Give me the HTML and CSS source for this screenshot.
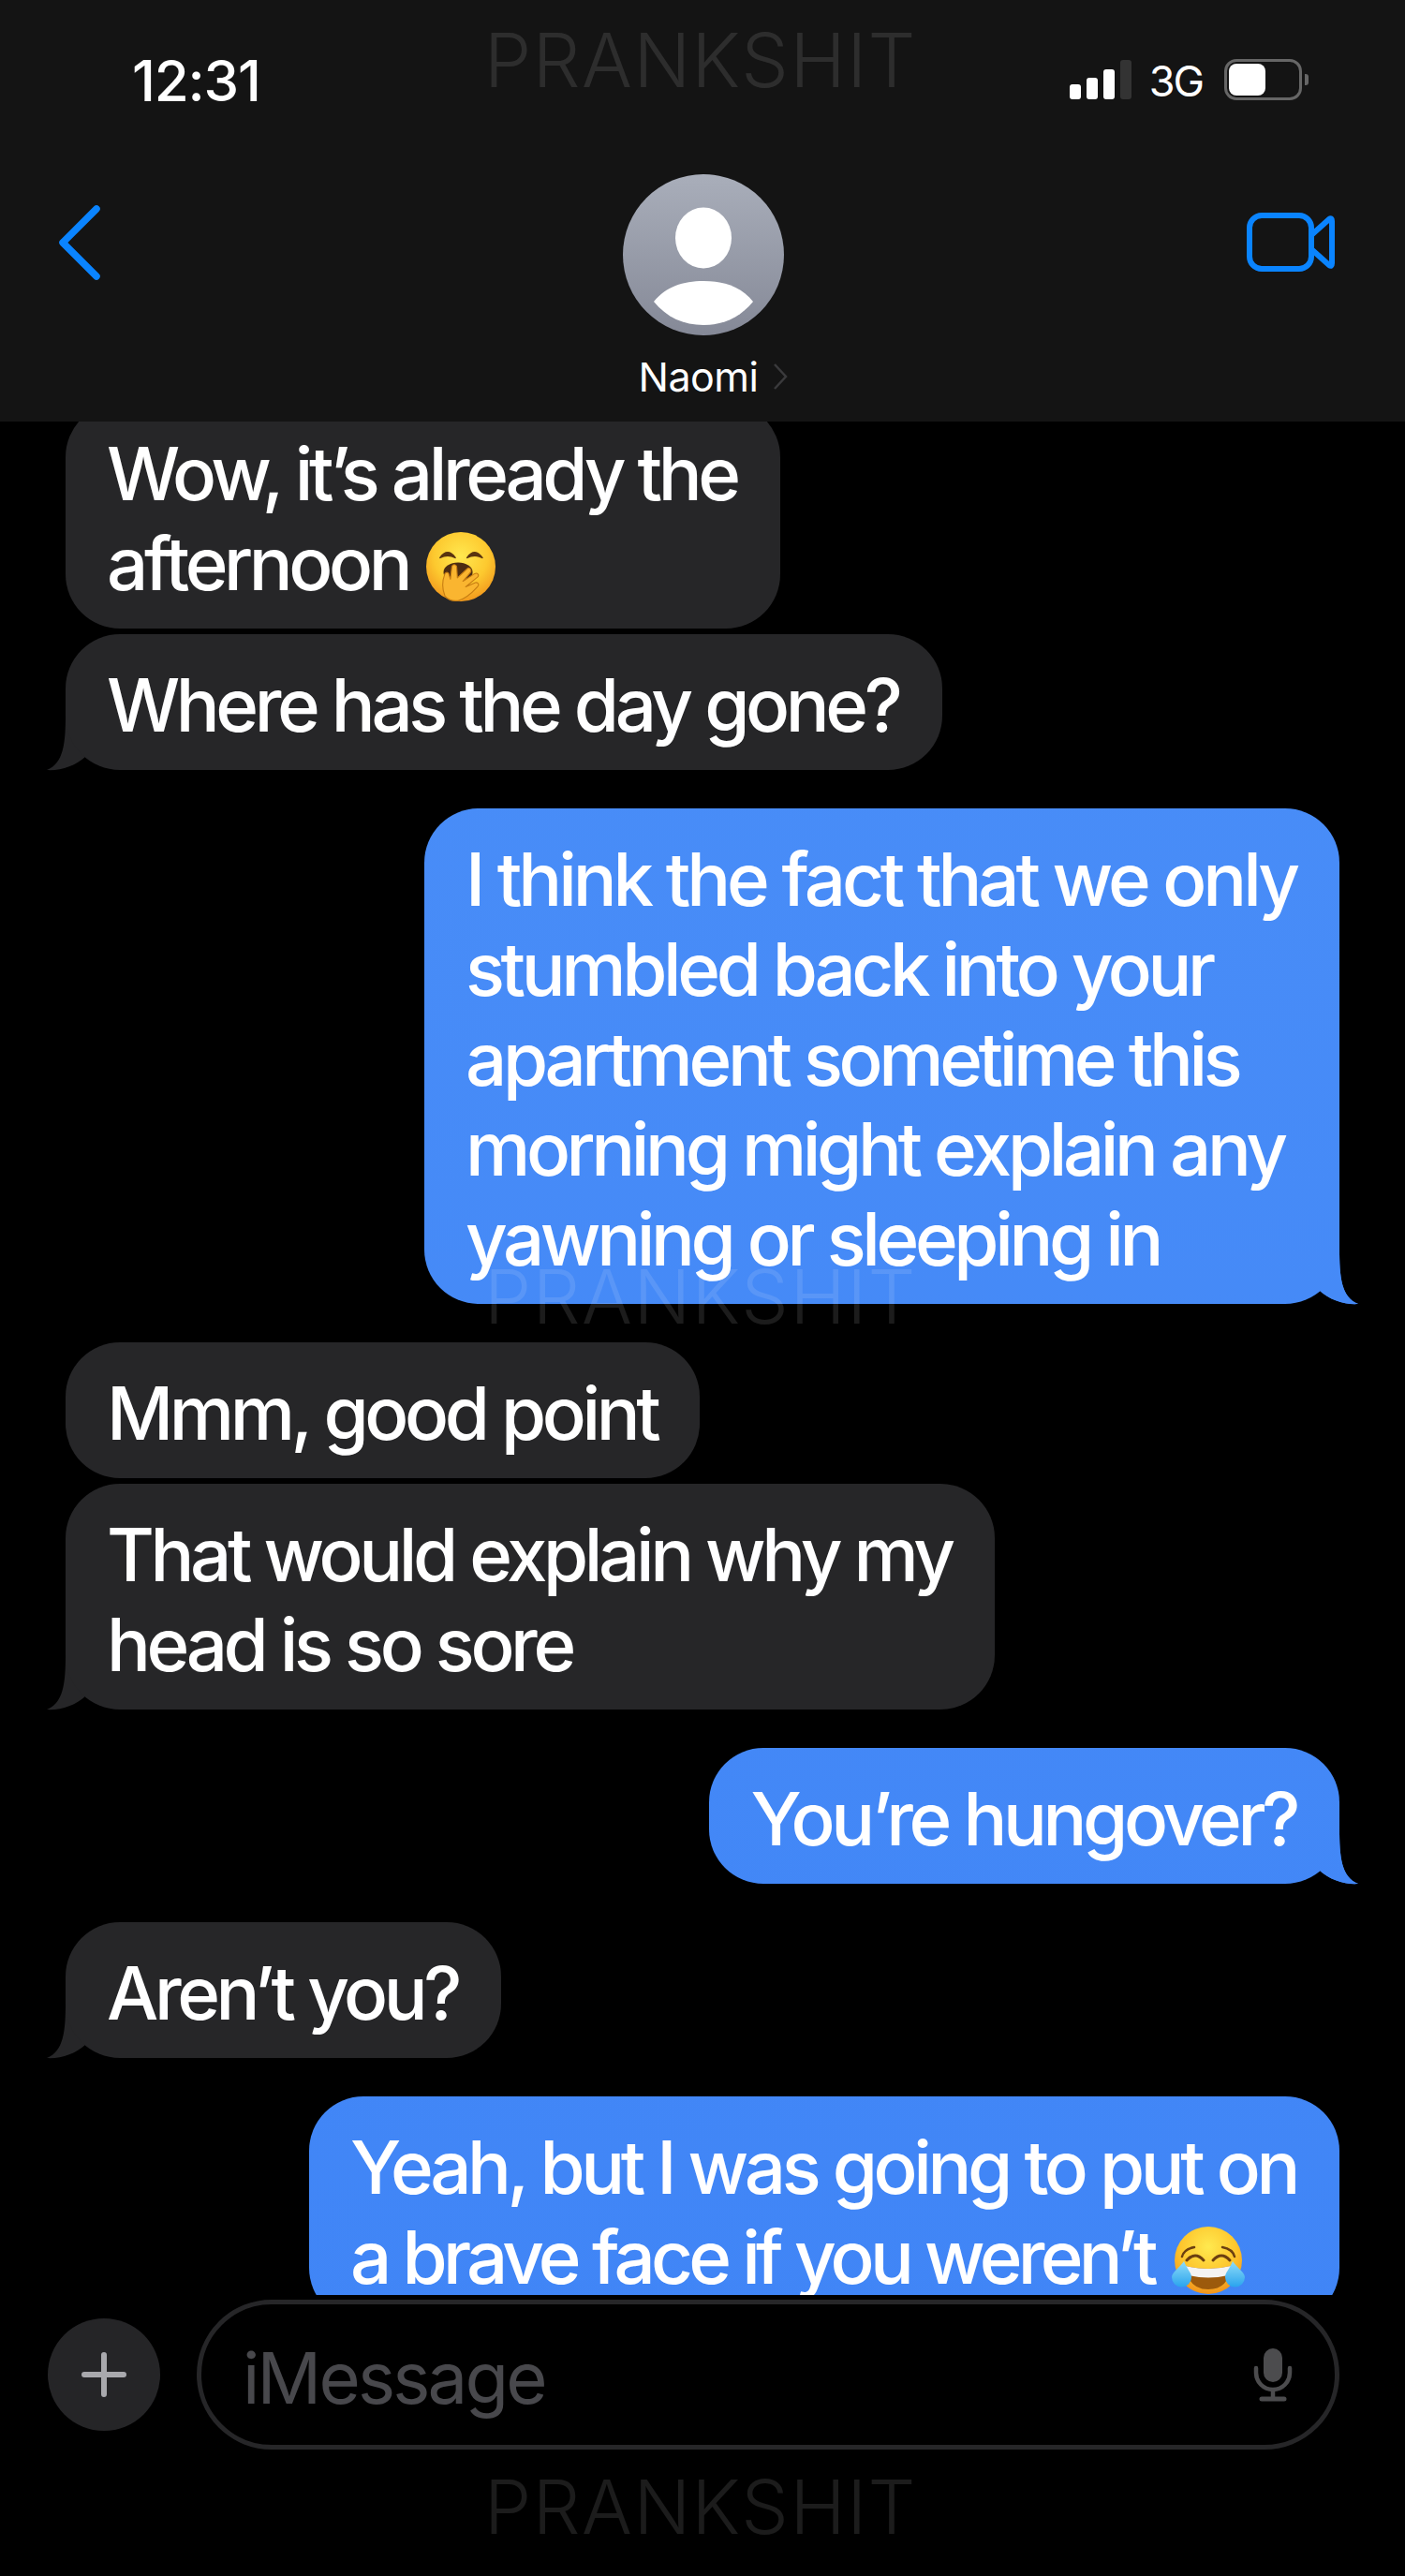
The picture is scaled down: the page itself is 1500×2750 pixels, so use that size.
FILE: index.html
```html
<!DOCTYPE html>
<html lang="en">
<head>
  <meta charset="UTF-8">
  <meta name="viewport" content="width=device-width, initial-scale=1.0">
  <title>Naomi</title>
  <link rel="stylesheet" href="styles.css">
</head>
<body>

<div class="phone">
  <header class="top">
    <div class="status">
      <span class="time">12:31</span>
      <div class="status-right">
        <div class="signal">
          <i class="bar bar1"></i>
          <i class="bar bar2"></i>
          <i class="bar bar3"></i>
          <i class="bar bar4"></i>
        </div>
        <span class="network">3G</span>
        <div class="battery"><i class="battery-fill"></i></div>
        <i class="battery-nub"></i>
      </div>
    </div>

    <div class="nav">
      <svg class="back" width="46" height="80" viewBox="0 0 46 80">
        <path d="M41 4 L5 40 L41 76" fill="none" stroke="#0a84ff" stroke-width="7.5" stroke-linecap="round" stroke-linejoin="round"/>
      </svg>

      <div class="contact">
        <svg class="avatar" width="172" height="172" viewBox="0 0 172 172">
          <defs>
            <linearGradient id="avatarBg" x1="0" y1="0" x2="0" y2="1">
              <stop offset="0" stop-color="#a9aeba"/>
              <stop offset="1" stop-color="#858997"/>
            </linearGradient>
          </defs>
          <circle cx="86" cy="86" r="86" fill="url(#avatarBg)"/>
          <ellipse cx="86" cy="68" rx="30" ry="32.5" fill="#fff"/>
          <path d="M33 136 C46 120 64 114 86 114 C108 114 126 120 139 136 C125 153 107 161 86 161 C65 161 47 153 33 136 Z" fill="#fff"/>
        </svg>
        <div class="name-row">
          <span class="name">Naomi</span>
          <svg class="name-arrow" width="16" height="28" viewBox="0 0 16 28">
            <path d="M2 1 L14 14 L2 27" fill="none" stroke="#3a3a3c" stroke-width="2.5"/>
          </svg>
        </div>
      </div>

      <svg class="video" width="94" height="63" viewBox="0 0 94 63">
        <rect x="3" y="3" width="66" height="57" rx="13" fill="none" stroke="#0a84ff" stroke-width="6"/>
        <path d="M69 24 L88 7 C90 5.500 91 6.500 91 9 L91 54 C91 56.500 90 57.500 88 56 L69 39" fill="none" stroke="#0a84ff" stroke-width="6" stroke-linejoin="round"/>
      </svg>
    </div>
  </header>

  <main class="thread">
    <div class="bubble in first">Wow, it’s already the<br>afternoon <svg class="emoji yawn" width="74" height="74" viewBox="0 0 100 100">
        <defs>
          <radialGradient id="faceA" cx="50%" cy="35%" r="65%">
            <stop offset="0" stop-color="#ffe84f"/>
            <stop offset="0.6" stop-color="#fdc92f"/>
            <stop offset="1" stop-color="#f29a1e"/>
          </radialGradient>
        </defs>
        <circle cx="50" cy="50" r="50" fill="url(#faceA)"/>
        <path d="M20 37 Q31 22 42 37 Q31 31 20 37 Z" fill="#5a3410" stroke="#5a3410" stroke-width="2" stroke-linejoin="round"/>
        <path d="M59 37 Q70 22 81 37 Q70 31 59 37 Z" fill="#5a3410" stroke="#5a3410" stroke-width="2" stroke-linejoin="round"/>
        <ellipse cx="46" cy="58" rx="21" ry="14" fill="#4c2c12"/>
        <path d="M27 92 C22 80 24 68 27 60 C29 57 33 58 33 62 L35 68 L37 50 C38 46 43 46 44 50 L45 66 L59 53 C62 50 66 54 64 58 L53 71 L70 60 C74 58 77 62 74 65 L57 79 L71 73 C75 72 77 76 74 79 C66 88 58 96 46 99 C38 100 31 97 27 92 Z" fill="#fab530" stroke="#c77d12" stroke-width="1.500" stroke-linejoin="round"/>
      </svg></div>
    <div class="bubble in tail near">Where has the day gone?</div>

    <div class="bubble out tail"><span class="loose">I think the fact that we only</span><br>stumbled back into your<br>apartment sometime this<br>morning might explain any<br>yawning or sleeping in</div>

    <div class="bubble in">Mmm, good point</div>
    <div class="bubble in tail near">That would explain why my<br>head is so sore</div>

    <div class="bubble out tail">You’re hungover?</div>

    <div class="bubble in tail">Aren’t you?</div>

    <div class="bubble out">Yeah, but I was going to put on<br><span class="tight">a brave face if you weren’t </span><svg class="emoji laugh" width="80" height="74" viewBox="0 0 80 74">
        <defs>
          <radialGradient id="faceB" cx="50%" cy="30%" r="70%">
            <stop offset="0" stop-color="#ffe94f"/>
            <stop offset="0.6" stop-color="#fdc52c"/>
            <stop offset="1" stop-color="#f1941c"/>
          </radialGradient>
          <linearGradient id="tear" x1="0" y1="0" x2="0" y2="1">
            <stop offset="0" stop-color="#8fdcf8"/>
            <stop offset="1" stop-color="#2aa4ee"/>
          </linearGradient>
        </defs>
        <circle cx="40" cy="37" r="36" fill="url(#faceB)"/>
        <g fill="none" stroke="#6b3f10" stroke-width="2.500" stroke-linecap="round">
          <path d="M12 33 Q14 25 25 23"/>
          <path d="M68 33 Q66 25 55 23"/>
          <path d="M17 37 Q26 27 35 37" stroke-width="3"/>
          <path d="M63 37 Q54 27 45 37" stroke-width="3"/>
        </g>
        <path d="M16 43 Q40 49 64 43 Q62 68 40 68 Q18 68 16 43 Z" fill="#9c5a0c"/>
        <path d="M16 43 Q40 49 64 43 Q63 50 61 53 Q40 58 19 53 Q17 50 16 43 Z" fill="#f4f4f2"/>
        <path d="M15 38 C18 46 23 50 23 55 A9 9 0 0 1 2 55 C2 50 11 44 15 38 Z" transform="translate(-1 0)" fill="url(#tear)"/>
        <path d="M65 38 C62 46 57 50 57 55 A9 9 0 0 0 78 55 C78 50 69 44 65 38 Z" transform="translate(1 0)" fill="url(#tear)"/>
      </svg></div>
  </main>

  <footer class="composer">
    <div class="plus">
      <svg width="48" height="48" viewBox="0 0 48 48">
        <path d="M24 3 V45 M3 24 H45" stroke="#a9a9ad" stroke-width="6" stroke-linecap="round"/>
      </svg>
    </div>
    <div class="input">
      <span class="placeholder">iMessage</span>
      <svg class="mic" width="42" height="58" viewBox="0 0 42 58">
        <rect x="11" y="1" width="20" height="36" rx="10" fill="#4c4c4e"/>
        <path d="M3 22 V27 C3 37 11 45 21 45 C31 45 39 37 39 27 V22" fill="none" stroke="#4c4c4e" stroke-width="4.500" stroke-linecap="round"/>
        <path d="M21 45 V54" stroke="#4c4c4e" stroke-width="4.500"/>
        <path d="M9 55 H33" stroke="#4c4c4e" stroke-width="5" stroke-linecap="round"/>
      </svg>
    </div>
  </footer>

  <div class="watermark mark-top">PRANKSHIT</div>
  <div class="watermark mark-mid">PRANKSHIT</div>
  <div class="watermark mark-bottom">PRANKSHIT</div>
</div>

</body>
</html>
```

FILE: styles.css
```css
* {
  box-sizing: border-box;
}
html {
  background-color: #000;
}
body {
  margin: 0;
}
.phone {
  position: relative;
  width: 1500px;
  height: 2750px;
  overflow: hidden;
  display: flex;
  flex-direction: column;
  font-family: Inter, "Noto Sans", sans-serif;
  color: #fff;
}

/* top bar */
.top {
  height: 450px;
  background-color: #141414;
  flex-shrink: 0;
}
.status {
  height: 186px;
  padding: 52px 103px 0 141px;
  display: flex;
  justify-content: space-between;
  align-items: flex-start;
}
.time {
  font-size: 60px;
  font-weight: 500;
  line-height: 68px;
  letter-spacing: -1.2px;
}
.status-right {
  display: flex;
  align-items: flex-start;
  padding-top: 11px;
}
.signal {
  display: flex;
  align-items: flex-end;
  gap: 6px;
  height: 42px;
  margin-top: 1px;
  margin-right: 2px;
}
.bar {
  width: 12px;
  border-radius: 3px;
  background-color: #fff;
}
.bar1 { height: 16px; }
.bar2 { height: 23px; }
.bar3 { height: 32px; }
.bar4 { height: 42px; background-color: #333; }
.network {
  margin-left: 17px;
  font-size: 45px;
  line-height: 42px;
  letter-spacing: -2px;
  margin-top: 3px;
}
.battery {
  margin-left: 23px;
  width: 83px;
  height: 44px;
  border: 3px solid #666;
  border-radius: 13px;
  padding: 2px;
}
.battery-fill {
  display: block;
  width: 39px;
  height: 34px;
  background-color: #fff;
  border-radius: 8px;
}
.battery-nub {
  width: 4px;
  height: 12px;
  margin: 16px 0 0 3px;
  background-color: #666;
  border-radius: 0 3px 3px 0;
}
.nav {
  display: grid;
  grid-template-columns: 1fr auto 1fr;
  align-items: start;
  padding: 0 75px 0 78px;
}
.back {
  margin: 33px 0 0 -16px;
}
.contact {
  display: flex;
  flex-direction: column;
  align-items: center;
}
.name-row {
  display: flex;
  align-items: center;
  margin-top: 19px;
  margin-left: 20px;
}
.name {
  font-size: 43px;
  line-height: 50px;
  letter-spacing: -0.5px;
}
.name-arrow {
  margin-left: 16px;
}
.video {
  margin-top: 41px;
  justify-self: end;
}

/* messages */
.thread {
  height: 2000px;
  flex-shrink: 0;
  overflow: hidden;
  display: flex;
  flex-direction: column;
  align-items: flex-start;
  padding: 0 70px;
}
.bubble {
  position: relative;
  flex-shrink: 0;
  margin-top: 41px;
  padding: 28px 46px 21px 44px;
  border-radius: 58px;
  font-size: 78px;
  font-weight: 450;
  line-height: 96px;
  letter-spacing: -4.4px;
  white-space: nowrap;
}
.bubble.first {
  margin-top: -20px;
}
.bubble.near {
  margin-top: 6px;
}
.loose {
  letter-spacing: -4.1px;
}
.tight {
  letter-spacing: -4.77px;
}
.in {
  background-color: #262628;
}
.out {
  align-self: flex-end;
  background: #4388f7 linear-gradient(#4c90f8, #3f84f6) fixed;
}
.tail::after {
  content: "";
  position: absolute;
  z-index: -1;
  bottom: -1px;
  width: 80px;
  height: 60px;
  background: inherit;
  clip-path: path("M60 0 C60 30 62 52 80 59 C66 60 49 55 38 44 C30 51 15 57 0 58 L0 0 Z");
}
.out.tail::after {
  right: -20px;
}
.in.tail::after {
  left: -20px;
  transform: scaleX(-1);
}
.emoji {
  vertical-align: -12px;
}
.yawn {
  margin-left: 2px;
}
.laugh {
  margin-left: 2px;
}

/* bottom bar */
.composer {
  display: flex;
  align-items: center;
  padding: 5px 70px 0 51px;
  gap: 39px;
}
.plus {
  width: 120px;
  height: 120px;
  border-radius: 50%;
  background-color: #252527;
  display: flex;
  align-items: center;
  justify-content: center;
}
.input {
  flex: 1;
  height: 160px;
  border: 5px solid #262628;
  border-radius: 80px;
  padding: 0 45px 0 44px;
  display: flex;
  align-items: center;
  justify-content: space-between;
}
.placeholder {
  font-size: 76px;
  letter-spacing: -2.800px;
  color: #48484c;
  padding-top: 6px;
}

/* repeated stamp, sits over everything */
.watermark {
  position: absolute;
  left: 0;
  right: 4px;
  text-align: center;
  font-size: 80px;
  font-weight: 300;
  line-height: 96px;
  letter-spacing: 1.5px;
  color: rgba(255, 255, 255, 0.11);
}
.mark-top { top: 16px; }
.mark-mid { top: 1336px; }
.mark-bottom { top: 2628px; }
```
